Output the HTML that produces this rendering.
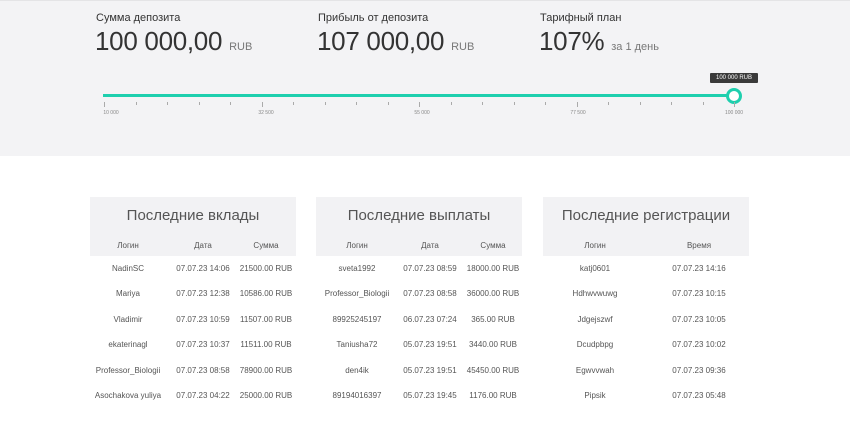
<!DOCTYPE html>
<html><head><meta charset="utf-8"><style>
*{margin:0;padding:0;box-sizing:border-box}
body{width:850px;height:429px;background:#fff;font-family:"Liberation Sans",sans-serif;position:relative;overflow:hidden;color:#444}
.top{position:absolute;left:0;top:0;width:850px;height:156px;background:#f3f3f5;border-top:1px solid #e4e4e6}
.a{position:absolute;white-space:nowrap}
.lbl{font-size:11px;color:#333;top:12px}
.big{font-size:26px;color:#333;top:26px;letter-spacing:-0.3px}
.big small{font-size:11px;color:#777;letter-spacing:0}
.tick{position:absolute;top:102px;width:1px;height:3px;background:#aaa}
.tick.m{height:5px}
.tl{position:absolute;top:110px;font-size:5px;color:#888;transform:translateX(-50%)}
.box{position:absolute;top:197px;width:206px;height:59px;background:#f2f2f4}
.h{position:absolute;top:207px;font-size:15px;color:#555;text-align:center;width:206px}
.c{position:absolute;font-size:8px;color:#555;transform:translateX(-50%);white-space:nowrap}
</style></head><body>
<div class="top"></div>
<div class="a lbl" style="left:96px">Сумма депозита</div>
<div class="a lbl" style="left:318px">Прибыль от депозита</div>
<div class="a lbl" style="left:540px">Тарифный план</div>
<div class="a big" style="left:95px">100 000,00 <small>RUB</small></div>
<div class="a big" style="left:317px">107 000,00 <small>RUB</small></div>
<div class="a big" style="left:539px">107% <small>за 1 день</small></div>
<div class="a" style="left:103px;top:94px;width:631px;height:3px;background:#1ecfae"></div>
<div class="a" style="left:710px;top:73px;width:48px;height:10px;background:#3a3a3a;color:#fff;font-size:6px;line-height:10px;text-align:center;border-radius:1px">100 000 RUB</div>
<div class="a" style="left:726px;top:88px;width:16px;height:16px;border-radius:50%;background:#fff;border:3px solid #1ecfae"></div>
<div id="ticks"></div>
<script>
var t='';for(var i=0;i<=20;i++){var x=104+i*31.5;t+='<div class="tick'+(i%5==0?' m':'')+'" style="left:'+x+'px"></div>';}
document.getElementById('ticks').innerHTML=t;
</script>
<div class="tl" style="left:111px">10 000</div>
<div class="tl" style="left:266px">32 500</div>
<div class="tl" style="left:422px">55 000</div>
<div class="tl" style="left:578px">77 500</div>
<div class="tl" style="left:734px">100 000</div>

<div class="box" style="left:90px"></div>
<div class="box" style="left:316px"></div>
<div class="box" style="left:543px"></div>
<div class="h" style="left:90px">Последние вклады</div>
<div class="h" style="left:316px">Последние выплаты</div>
<div class="h" style="left:543px">Последние регистрации</div>
<div id="tb"></div>
<script>
function T(cols,hdr,rows){var s='';hdr.forEach(function(h,j){s+='<div class="c" style="left:'+cols[j]+'px;top:241px">'+h+'</div>';});
rows.forEach(function(r,i){r.forEach(function(v,j){s+='<div class="c" style="left:'+cols[j]+'px;top:'+(264+i*25.4)+'px">'+v+'</div>';});});return s;}
var h='';
h+=T([128,203,266],['Логин','Дата','Сумма'],[['NadinSC','07.07.23 14:06','21500.00 RUB'],['Mariya','07.07.23 12:38','10586.00 RUB'],['Vladimir','07.07.23 10:59','11507.00 RUB'],['ekaterinagl','07.07.23 10:37','11511.00 RUB'],['Professor_Biologii','07.07.23 08:58','78900.00 RUB'],['Asochakova yuliya','07.07.23 04:22','25000.00 RUB']]);
h+=T([357,430,493],['Логин','Дата','Сумма'],[['sveta1992','07.07.23 08:59','18000.00 RUB'],['Professor_Biologii','07.07.23 08:58','36000.00 RUB'],['89925245197','06.07.23 07:24','365.00 RUB'],['Taniusha72','05.07.23 19:51','3440.00 RUB'],['den4ik','05.07.23 19:51','45450.00 RUB'],['89194016397','05.07.23 19:45','1176.00 RUB']]);
h+=T([595,699],['Логин','Время'],[['katj0601','07.07.23 14:16'],['Hdhwvwuwg','07.07.23 10:15'],['Jdgejszwf','07.07.23 10:05'],['Dcudpbpg','07.07.23 10:02'],['Egwvvwah','07.07.23 09:36'],['Pipsik','07.07.23 05:48']]);
document.getElementById('tb').innerHTML=h;
</script>
</body></html>
